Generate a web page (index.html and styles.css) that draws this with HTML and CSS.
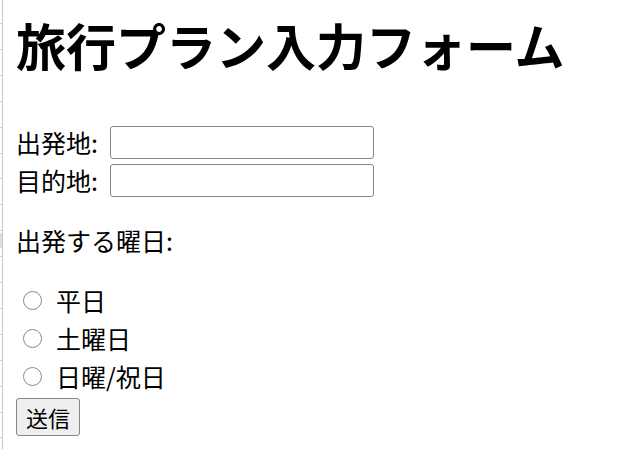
FILE: index.html
```html
<!DOCTYPE html>
<html lang="ja">
<head>
<meta charset="utf-8">
<title>旅行プラン入力フォーム</title>
<link rel="stylesheet" href="styles.css">
</head>
<body>
<div class="edge"><span class="edge-sel"></span></div>
<main class="page">
  <h1 class="title">旅行プラン入力フォーム</h1>
  <form class="form">
    <div class="field"><label class="label" for="from">出発地:</label><input class="text" type="text" id="from"></div>
    <div class="field"><label class="label" for="to">目的地:</label><input class="text" type="text" id="to"></div>
    <p class="question">出発する曜日:</p>
    <div class="options">
      <label class="option"><input class="radio" type="radio" name="day"><span>平日</span></label>
      <label class="option"><input class="radio" type="radio" name="day"><span>土曜日</span></label>
      <label class="option"><input class="radio" type="radio" name="day"><span>日曜/祝日</span></label>
    </div>
    <button class="submit" type="submit">送信</button>
  </form>
</main>
</body>
</html>
```
FILE: styles.css
```css
html, body {
  margin: 0;
  padding: 0;
  background: #fff;
}
body {
  display: flex;
  min-height: 449px;
  font-family: "Noto Sans CJK JP", "Noto Sans", sans-serif;
  font-size: 25px;
  color: #000;
}
.edge {
  flex: none;
  width: 2px;
  border-right: 1px solid #c6c6c6;
  background-image: repeating-linear-gradient(to bottom, transparent 0, transparent 24px, #d4d4d4 24px, #d4d4d4 25px, transparent 25px, transparent 25.9px);
  background-position: 0 -1px;
  display: flex;
  flex-direction: column;
}
.edge-sel {
  margin-top: 233px;
  height: 15px;
  background: #cfe1f5;
}
.page {
  padding-left: 13px;
}
.title {
  margin: 12px 0 0;
  font-size: 50px;
  line-height: 65px;
  font-weight: 700;
}
.form {
  margin-top: 46px;
}
.field {
  display: flex;
  align-items: center;
  height: 38px;
  gap: 12px;
}
.label {
  line-height: 38px;
}
.text {
  box-sizing: border-box;
  width: 264px;
  height: 33px;
  margin: 0;
  border: 1px solid #858585;
  border-radius: 3px;
  background: #fff;
}
.question {
  margin: 23px 0 0;
  line-height: 36px;
}
.options {
  margin-top: 23px;
  display: flex;
  flex-direction: column;
}
.option {
  display: flex;
  align-items: center;
  height: 38px;
  gap: 14px;
}
.radio {
  appearance: none;
  box-sizing: border-box;
  width: 19px;
  height: 19px;
  margin: 0 0 0 7px;
  border: 1.5px solid #8a8a8a;
  border-radius: 50%;
  background: #fff;
}
.submit {
  margin-top: 3px;
  box-sizing: border-box;
  width: 64px;
  height: 38px;
  padding: 0;
  font-family: inherit;
  font-size: 22px;
  color: #000;
  background: #efefef;
  border: 1px solid #858585;
  border-radius: 3px;
}
```
